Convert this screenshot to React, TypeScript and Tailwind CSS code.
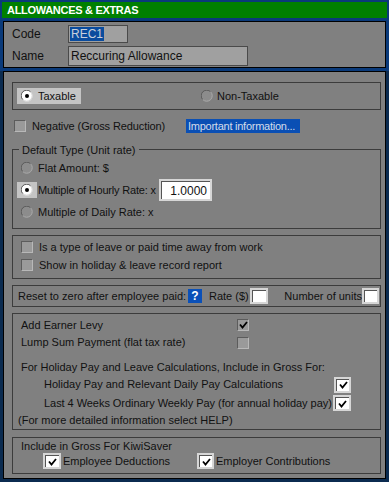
import React from "react";

const font = { fontFamily: '"Liberation Sans", Arial, sans-serif' };

function Radio({ checked }: { checked?: boolean }) {
  return (
    <svg width="12" height="12" viewBox="0 0 12 12" className="shrink-0">
      <circle cx="6" cy="6" r="5.5" fill={checked ? "#ffffff" : "#8c8c8c"} />
      <path d="M1.8 9.6 A5 5 0 0 1 9.6 1.8" fill="none" stroke="#5a5a5a" strokeWidth="1" />
      <path d="M9.6 1.8 A5 5 0 0 1 1.8 9.6" fill="none" stroke={checked ? "#d0d0d0" : "#a8a8a8"} strokeWidth="1" />
      {checked && <circle cx="6" cy="6" r="2" fill="#000000" />}
    </svg>
  );
}

function CheckMark() {
  return (
    <svg width="9" height="8" viewBox="0 0 9 8">
      <path d="M1 3.5 L3.5 6.5 L8 1" fill="none" stroke="#000" strokeWidth="1.8" />
    </svg>
  );
}

function GrayBox({ checked }: { checked?: boolean }) {
  return (
    <div className="w-[12px] h-[12px] shrink-0 bg-[#9a9a9a] border border-t-[#5c5c5c] border-l-[#5c5c5c] border-r-[#b8b8b8] border-b-[#b8b8b8] flex items-center justify-center">
      {checked && <CheckMark />}
    </div>
  );
}

function WhiteBox({ checked, w = "w-[17px]" }: { checked?: boolean; w?: string }) {
  return (
    <div className={`${w} h-[16px] shrink-0 bg-[#d6d6d6] p-[2px]`}>
      <div className="w-full h-full bg-white border-t border-l border-[#555] flex items-center justify-center">
        {checked && <CheckMark />}
      </div>
    </div>
  );
}

export default function App() {
  return (
    <div style={font} className="w-[389px] h-[482px] bg-[#0b2b50] text-[11px] text-[#111] whitespace-nowrap overflow-hidden">
      {/* Header + Code/Name */}
      <div className="bg-[#0a3a7a] pt-[2px] pb-[3px]">
        <div className="mx-[2px] h-[16px] w-[385px] bg-[#008000] flex items-center pl-[5px] text-white font-bold text-[11px] tracking-[-0.3px]">
          ALLOWANCES &amp; EXTRAS
        </div>
      </div>
      <div className="bg-[#0a3a7a] pl-[3px] pb-[3px] -mt-[3px] pt-[3px]">
        <div className="w-[383px] h-[47px] bg-[#808080] border border-black pl-[8px] pt-[3px] text-[12px]">
          <div className="flex items-center h-[18px]">
            <div className="w-[56px]">Code</div>
            <div className="w-[60px] h-[18px] bg-[#a0a0a0] border border-[#4a4a4a] flex items-center pl-[1px]">
              <span className="bg-[#0a4c9e] text-[#c8d0dc] px-[1px] leading-[14px]">REC1</span>
            </div>
          </div>
          <div className="flex items-center h-[20px] mt-[3px]">
            <div className="w-[56px]">Name</div>
            <div className="w-[180px] h-[20px] bg-[#a0a0a0] border border-[#4a4a4a] flex items-center pl-[2px]">
              Reccuring Allowance
            </div>
          </div>
        </div>
      </div>

      {/* Main panel */}
      <div className="ml-[3px] w-[383px] h-[408px] bg-[#808080] border border-black">
        {/* Taxable */}
        <div className="ml-[8px] mt-[10px] w-[369px] h-[28px] border border-[#3c3c3c] flex items-center pl-[4px]">
          <div className="w-[180px]">
            <div className="w-[64px] h-[16px] bg-[#c4c4c4] flex items-center">
              <div className="w-[20px] flex justify-center"><Radio checked /></div>
              <span className="ml-[1px]">Taxable</span>
            </div>
          </div>
          <div className="w-[20px] flex justify-center"><Radio /></div>
          <span>Non-Taxable</span>
        </div>

        {/* Negative */}
        <div className="mt-[9px] h-[14px] flex items-center pl-[10px]">
          <GrayBox />
          <span className="ml-[6px] w-[154px] tracking-[-0.1px]">Negative (Gross Reduction)</span>
          <div className="w-[114px] h-[14px] bg-[#0a4fb4] text-[#d4dcea] pl-[2px] flex items-center overflow-hidden tracking-[-0.25px]">
            Important information...
          </div>
        </div>

        {/* Default type */}
        <div className="relative ml-[8px] mt-[16px] w-[369px] h-[80px] border border-[#3c3c3c] pt-[7px] pl-[4px]">
          <span className="absolute left-[6px] -top-[8px] bg-[#808080] px-[3px]">Default Type (Unit rate)</span>
          <div className="h-[22px] flex items-center">
            <div className="w-[20px] flex justify-center"><Radio /></div>
            <span className="ml-[1px]">Flat Amount: $</span>
          </div>
          <div className="h-[22px] flex items-center">
            <div className="w-[20px] h-[16px] bg-[#c4c4c4] flex items-center justify-center"><Radio checked /></div>
            <span className="ml-[1px] w-[121px] tracking-[-0.2px]">Multiple of Hourly Rate: x</span>
            <div className="w-[53px] h-[22px] bg-[#d6d6d6] p-[2px]">
              <div className="w-full h-full bg-white border-t border-l border-[#555] flex items-center justify-end pr-[3px] text-[12px]">
                1.0000
              </div>
            </div>
          </div>
          <div className="h-[22px] flex items-center">
            <div className="w-[20px] flex justify-center"><Radio /></div>
            <span className="ml-[1px]">Multiple of Daily Rate: x</span>
          </div>
        </div>

        {/* Leave */}
        <div className="ml-[8px] mt-[6px] w-[369px] h-[44px] border border-[#3c3c3c] pt-[2px] pl-[8px]">
          <div className="h-[18px] flex items-center">
            <GrayBox />
            <span className="ml-[6px]">Is a type of leave or paid time away from work</span>
          </div>
          <div className="h-[18px] flex items-center">
            <GrayBox />
            <span className="ml-[6px]">Show in holiday &amp; leave record report</span>
          </div>
        </div>

        {/* Reset */}
        <div className="ml-[8px] mt-[6px] w-[369px] h-[22px] border border-[#3c3c3c] pl-[5px] pr-[1px] flex items-center">
          <span className="w-[170px]">Reset to zero after employee paid:</span>
          <div className="w-[14px] h-[14px] bg-[#0a50b8] text-white font-bold text-[12px] flex items-center justify-center">?</div>
          <span className="ml-[7px] w-[41px]">Rate ($)</span>
          <WhiteBox w="w-[18px]" />
          <div className="flex-1 flex items-center justify-end">
            <span>Number of units</span>
            <WhiteBox />
          </div>
        </div>

        {/* Earner levy / holiday */}
        <div className="ml-[8px] mt-[6px] w-[369px] h-[117px] border border-[#3c3c3c] pt-[2px]">
          <div className="h-[18px] flex items-center pl-[8px]">
            <span className="w-[216px]">Add Earner Levy</span>
            <GrayBox checked />
          </div>
          <div className="h-[17px] flex items-center pl-[8px]">
            <span className="w-[216px]">Lump Sum Payment (flat tax rate)</span>
            <GrayBox />
          </div>
          <div className="h-[18px] mt-[7px] flex items-center pl-[8px]">
            For Holiday Pay and Leave Calculations, Include in Gross For:
          </div>
          <div className="h-[17px] flex items-center pl-[31px]">
            <span className="w-[290px]">Holiday Pay and Relevant Daily Pay Calculations</span>
            <WhiteBox checked />
          </div>
          <div className="h-[18px] mt-[1px] flex items-center pl-[31px]">
            <span className="w-[289px] tracking-[-0.05px]">Last 4 Weeks Ordinary Weekly Pay (for annual holiday pay)</span>
            <WhiteBox checked w="w-[18px]" />
          </div>
          <div className="h-[17px] flex items-center pl-[5px]">
            (For more detailed information select HELP)
          </div>
        </div>

        {/* KiwiSaver */}
        <div className="ml-[8px] mt-[7px] w-[369px] h-[37px] border border-[#3c3c3c] pt-[1px]">
          <div className="h-[14px] flex items-center pl-[8px]">Include in Gross For KiwiSaver</div>
          <div className="h-[16px] flex items-center pl-[30px]">
            <div className="w-[154px] flex items-center">
              <WhiteBox checked w="w-[18px]" />
              <span className="ml-[2px]">Employee Deductions</span>
            </div>
            <WhiteBox checked w="w-[17px]" />
            <span className="ml-[2px]">Employer Contributions</span>
          </div>
        </div>
      </div>
    </div>
  );
}
